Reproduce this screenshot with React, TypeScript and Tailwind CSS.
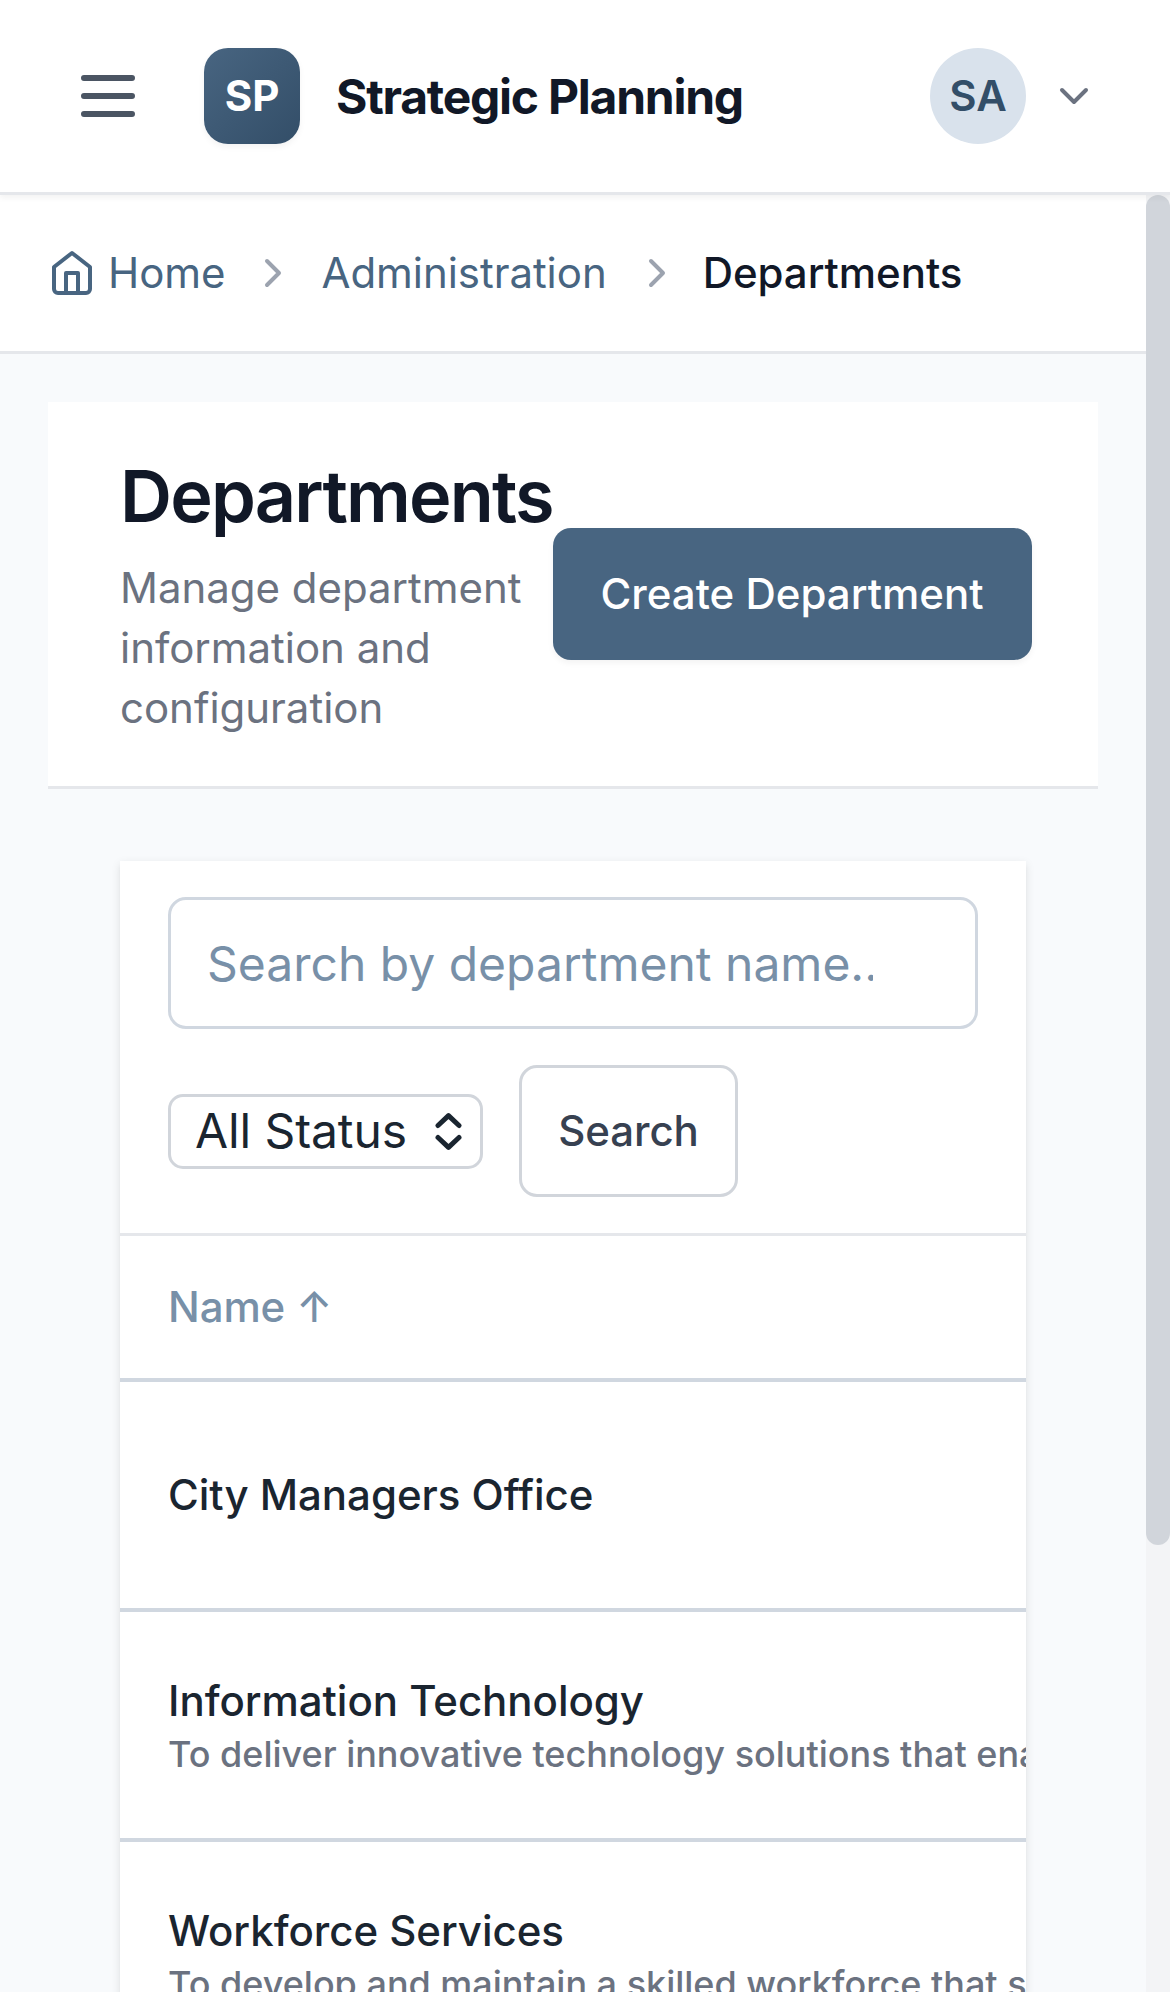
import { ChevronDown, ChevronRight } from "lucide-react";

type Department = { name: string; mission?: string };

const departments: Department[] = [
  { name: "City Managers Office" },
  {
    name: "Information Technology",
    mission: "To deliver innovative technology solutions that enable efficient city services",
  },
  {
    name: "Workforce Services",
    mission: "To develop and maintain a skilled workforce that supports our community",
  },
];

function MenuIcon() {
  return (
    <svg className="size-[72px]" viewBox="0 0 24 24" fill="none" stroke="currentColor" strokeWidth="2" strokeLinecap="round">
      <path d="M4 6h16M4 12h16M4 18h16" />
    </svg>
  );
}

function HomeIcon() {
  return (
    <svg className="size-12" viewBox="0 0 24 24" fill="none" stroke="currentColor" strokeWidth="2" strokeLinecap="round" strokeLinejoin="round">
      <path d="m3 9 9-7 9 7v11a2 2 0 0 1-2 2H5a2 2 0 0 1-2-2z" />
      <path d="M9 22V12h6v10" />
    </svg>
  );
}

function SelectArrows() {
  return (
    <svg className="h-[37px] w-[27px]" viewBox="0 0 27 37" fill="none" stroke="currentColor" strokeWidth="5" strokeLinecap="round" strokeLinejoin="round">
      <path d="M3 12.5 13.5 2.7 24 12.5M3 24.5 13.5 34.3 24 24.5" />
    </svg>
  );
}

function Header() {
  return (
    <header className="relative z-10 flex h-[195px] shrink-0 items-center justify-between border-b-[3px] border-[#e5e7eb] bg-white px-[72px] shadow-[0_3px_6px_rgba(0,0,0,0.05)]">
      <div className="flex items-center">
        <button className="text-[#4b5563]">
          <MenuIcon />
        </button>
        <div className="ml-[60px] flex size-24 items-center justify-center rounded-3xl bg-linear-to-br from-[#486581] to-[#334e68] pb-px text-[42px] font-bold tracking-[-0.05px] text-white shadow-[0_3px_6px_rgba(0,0,0,0.05)]">
          SP
        </div>
        <span className="ml-9 pt-[2px] text-5xl font-bold tracking-[-1.25px] text-[#111827]">Strategic Planning</span>
      </div>
      <div className="flex items-center gap-6">
        <div className="flex size-24 items-center justify-center rounded-full bg-[#d9e2ec] pb-px text-[42px] font-semibold text-[#334e68]">
          SA
        </div>
        <ChevronDown className="size-12 text-[#6b7280]" />
      </div>
    </header>
  );
}

function Breadcrumb() {
  return (
    <nav className="flex h-[159px] shrink-0 items-center gap-6 border-b-[3px] border-[#e5e7eb] bg-white px-12 text-[42px] leading-[60px] tracking-[-0.05px] text-[#486581]">
      <a className="flex items-center gap-3">
        <HomeIcon />
        Home
      </a>
      <ChevronRight className="size-12 text-[#9ca3af]" />
      <a>Administration</a>
      <ChevronRight className="-mr-[2px] ml-[2px] size-12 text-[#9ca3af]" />
      <span className="font-medium text-[#111827]">Departments</span>
    </nav>
  );
}

function PageHeading() {
  return (
    <section className="flex h-[387px] items-center border-b-[3px] border-[#e5e7eb] bg-white pl-[72px]">
      <div className="w-[433px] shrink-0">
        <h1 className="pt-px text-[72px] leading-[90px] font-semibold tracking-[-0.025em] text-[#111827]">Departments</h1>
        <p className="mt-[17px] text-[42px] leading-[60px] tracking-[-0.03px] text-[#6b7280]">Manage department information and configuration</p>
      </div>
      <button className="h-[132px] w-[479px] shrink-0 rounded-[18px] bg-[#486581] pr-[7px] pb-[2px] pl-[6px] text-[42px] font-medium whitespace-nowrap text-white shadow-[0_3px_6px_rgba(0,0,0,0.05)]">
        Create Department
      </button>
    </section>
  );
}

function Filters() {
  return (
    <div className="flex h-[375px] flex-col gap-9 border-b-[3px] border-[#e5e7eb] px-12 pt-9">
      <div className="flex h-[132px] items-center rounded-[18px] border-[3px] border-[#d0d7e0] pt-[2px] pl-9">
        <span className="w-[666px] overflow-hidden text-5xl leading-[72px] whitespace-nowrap text-[#7890a8]">
          Search by department name...
        </span>
      </div>
      <div className="flex items-center gap-9">
        <button className="flex h-[75px] w-[315px] items-center justify-between rounded-[15px] border-[3px] border-[#d1d5db] pr-[18px] pl-6 text-5xl tracking-[-0.1px] text-[#1a2530]">
          All Status
          <SelectArrows />
        </button>
        <button className="h-[132px] w-[219px] rounded-[18px] border-[3px] border-[#d1d5db] pb-[2px] text-[42px] font-medium tracking-[-0.1px] text-[#374151]">
          Search
        </button>
      </div>
    </div>
  );
}

function DepartmentTable() {
  return (
    <div>
      <div className="flex h-[146px] items-center border-b-4 border-[#d0d7e0] px-12 pb-[2px] text-[42px] font-medium tracking-[-0.1px] text-[#7890a8]">
        Name ↑
      </div>
      {departments.map((d) => (
        <div key={d.name} className="flex h-[230px] flex-col justify-center border-b-4 border-[#d0d7e0] px-12 font-medium tracking-[-0.03px] whitespace-nowrap">
          <div className="text-[42px] leading-[60px] text-[#1a2530]">{d.name}</div>
          {d.mission && <div className="-mt-px mb-px text-4xl leading-[48px] tracking-[-0.01px] text-[#6b7280]">{d.mission}</div>}
        </div>
      ))}
    </div>
  );
}

export default function App() {
  return (
    <div className="flex h-[1992px] w-[1170px] flex-col overflow-hidden bg-[#f8fafc] font-['Inter',sans-serif]">
      <Header />
      <div className="flex min-h-0 flex-1">
        <main className="w-[1146px] overflow-hidden">
          <Breadcrumb />
          <div className="px-12 pt-12">
            <PageHeading />
            <div className="mx-[72px] mt-[72px] overflow-hidden bg-white shadow-[0_3px_9px_rgba(0,0,0,0.1),0_3px_6px_-3px_rgba(0,0,0,0.1)]">
              <Filters />
              <DepartmentTable />
            </div>
          </div>
        </main>
        <div className="w-6 bg-[#f3f4f6]">
          <div className="h-[1350px] rounded-full bg-[#d1d5db]" />
        </div>
      </div>
    </div>
  );
}
